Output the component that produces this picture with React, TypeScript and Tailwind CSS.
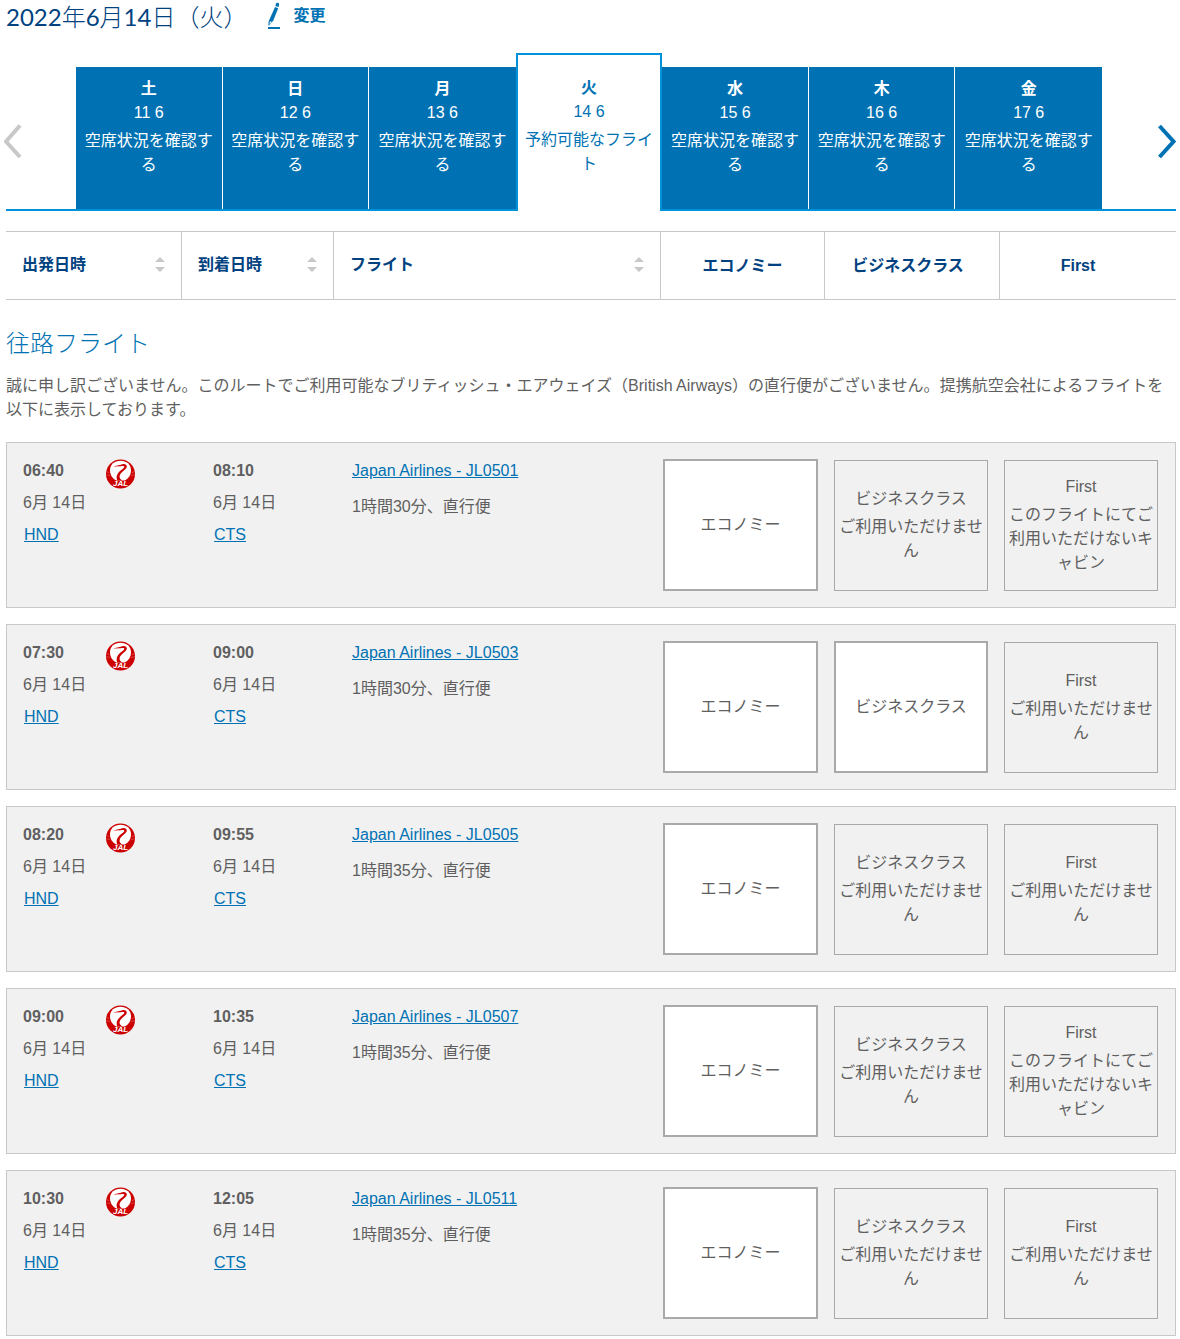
import React from "react";

type Cabin = { name: string; note?: string };
type Flight = { dep: string; arr: string; code: string; duration: string; cabins: Cabin[] };

const SOLD_OUT = "ご利用いただけません";
const NO_CABIN = "このフライトにてご利用いただけないキャビン";

const makeCabins = (business?: string, first?: string): Cabin[] => [
  { name: "エコノミー" },
  { name: "ビジネスクラス", note: business },
  { name: "First", note: first },
];

const flights: Flight[] = [
  { dep: "06:40", arr: "08:10", code: "JL0501", duration: "1時間30分", cabins: makeCabins(SOLD_OUT, NO_CABIN) },
  { dep: "07:30", arr: "09:00", code: "JL0503", duration: "1時間30分", cabins: makeCabins(undefined, SOLD_OUT) },
  { dep: "08:20", arr: "09:55", code: "JL0505", duration: "1時間35分", cabins: makeCabins(SOLD_OUT, SOLD_OUT) },
  { dep: "09:00", arr: "10:35", code: "JL0507", duration: "1時間35分", cabins: makeCabins(SOLD_OUT, NO_CABIN) },
  { dep: "10:30", arr: "12:05", code: "JL0511", duration: "1時間35分", cabins: makeCabins(SOLD_OUT, SOLD_OUT) },
];

const days = [
  { day: "土", date: "11 6" },
  { day: "日", date: "12 6" },
  { day: "月", date: "13 6" },
  { day: "火", date: "14 6", active: true },
  { day: "水", date: "15 6" },
  { day: "木", date: "16 6" },
  { day: "金", date: "17 6" },
];

const cabinPadding = ["pl-[2px] pr-[7px]", "pl-[9px] pr-3", "pl-1 pr-[17px] border-r"];

function PencilIcon() {
  return (
    <svg width="14" height="28" viewBox="0 0 14 28" fill="#0072b4" aria-hidden="true">
      <path d="M8.8 2 10 .4 12.2 1.4 11.8 4.4 11.2 5 8.4 4z" />
      <path d="M8 5 11.2 6.2 6.2 18.8 1.4 24 1.6 19.6z" />
      <path d="M2.8 19.2 4.8 20 2.6 22.2z" fill="#fff" />
      <rect x="1" y="25" width="12" height="2" />
    </svg>
  );
}

function JalLogo() {
  return (
    <svg width="30" height="30" viewBox="0 0 30 30" className="shrink-0" role="img" aria-label="Japan Airlines">
      <circle cx="14.5" cy="15" r="14.5" fill="#cc0000" />
      <path
        d="M14.5 1.8C20.5 1.8 25 5.6 25 11.2 25 16 22.2 20 18.6 21.4H10.4C6.8 20 4 16 4 11.2 4 5.6 8.5 1.8 14.5 1.8Z"
        fill="#fff"
      />
      <path
        d="M6.8 7.6 14.8 5.8C16.8 4.4 20.4 4.6 20.8 7.2 21.2 10.4 14.2 13 13.6 17 13.3 19 14.6 20.6 16.6 21.6H11.4C9.4 17.4 11.6 13.8 15.2 11 17.2 9.4 18.8 8.4 18.2 7.4 17.6 6.7 16 7.1 14.8 7.3Z"
        fill="#cc0000"
      />
      <g stroke="#fff" strokeWidth="0.4" strokeOpacity="0.7" fill="none">
        <path d="M.6 12.5 3.2 13.8M.6 15.5 4 16.6" />
        <path d="M28.4 12.5 25.8 13.8M28.4 15.5 25 16.6" />
      </g>
      <text x="14.5" y="26.8" textAnchor="middle" fontSize="8" fontWeight="700" fontStyle="italic" fill="#fff" fontFamily="Liberation Sans, sans-serif">
        JAL
      </text>
    </svg>
  );
}

function SortIcon() {
  return (
    <svg width="10" height="15" viewBox="0 0 10 15" fill="#c8c8c8" aria-hidden="true">
      <path d="M5 0 10 5H0zM0 10H10L5 15z" />
    </svg>
  );
}

function SortHeader({ label }: { label: string }) {
  return (
    <th scope="col" className="border-y border-r border-[#c8c8c8] p-0">
      <button className="flex h-[67px] w-full items-center justify-between pr-4 pb-0.5 pl-4 text-left font-bold">
        <span>{label}</span>
        <SortIcon />
      </button>
    </th>
  );
}

function Stop({ time, airport }: { time: string; airport: string }) {
  return (
    <div>
      <div className="font-bold">{time}</div>
      <div className="mt-2">6月 14日</div>
      <a href="#" className="mt-2 ml-px block w-fit text-[#0072b4] underline">
        {airport}
      </a>
    </div>
  );
}

function CabinBox({ cabin }: { cabin: Cabin }) {
  if (!cabin.note) {
    return (
      <button className="flex h-[132px] w-full items-center justify-center border-2 border-[#a9a9a9] bg-white">
        {cabin.name}
      </button>
    );
  }
  return (
    <div className="mt-px flex h-[131px] w-full flex-col items-center justify-center gap-1 border border-[#a9a9a9] px-1 pb-px text-center">
      <span>{cabin.name}</span>
      <span>{cabin.note}</span>
    </div>
  );
}

function FlightRow({ flight }: { flight: Flight }) {
  const cell = "border-y border-[#c8c8c8] bg-[#f1f1f1] align-top";
  return (
    <tr className="h-[166px]">
      <td className={`${cell} border-l pt-4 pl-4`}>
        <div className="flex items-start gap-5">
          <Stop time={flight.dep} airport="HND" />
          <JalLogo />
        </div>
      </td>
      <td className={`${cell} pt-4 pl-[31px]`}>
        <Stop time={flight.arr} airport="CTS" />
      </td>
      <td className={`${cell} pt-4 pl-[18px]`}>
        <a href="#" className="block w-fit text-[#0072b4] underline">
          Japan Airlines - {flight.code}
        </a>
        <div className="mt-3">{flight.duration}、直行便</div>
      </td>
      {flight.cabins.map((cabin, i) => (
        <td key={cabin.name} className={`${cell} py-4 ${cabinPadding[i]}`}>
          <CabinBox cabin={cabin} />
        </td>
      ))}
    </tr>
  );
}

export default function App() {
  return (
    <main
      lang="ja"
      className="bg-white pr-1 pl-1.5 font-['Liberation_Sans','Noto_Sans_CJK_JP',sans-serif] text-base leading-6 text-[#5f5f5f]"
    >
      <header className="flex h-[53px] items-start">
        <h1 className="pt-px font-['Lato','Noto_Sans_CJK_JP',sans-serif] text-2xl leading-8 font-normal text-[#00427f]">
          2022<span className="font-light">年</span>6<span className="font-light">月</span>14
          <span className="font-light">日（火）</span>
        </h1>
        <button className="ml-5 flex h-8 items-center gap-3 font-bold text-[#0072b4]">
          <PencilIcon />
          変更
        </button>
      </header>

      <nav aria-label="日付" className="flex items-end">
        <button aria-label="前の日" className="flex h-36 w-[70px] shrink-0 items-center border-b-2 border-[#0093d9] pt-1.5">
          <svg width="18" height="34" viewBox="0 0 18 34" fill="none" stroke="#c8c8c8" strokeWidth="4" className="-ml-0.5">
            <path d="M16 1.5 2 17.5 16 33" />
          </svg>
        </button>
        <ol className="grid flex-1 grid-cols-7 items-end text-center">
          {days.map((d, i) => (
            <li
              key={d.day}
              className={
                d.active
                  ? "h-[158px] border-2 border-b-0 border-[#0093d9] bg-white text-[#0072b4]"
                  : "h-36 border-b-2 border-[#0093d9] bg-[#0072b4] text-white"
              }
            >
              <a
                href="#"
                className={
                  d.active
                    ? "block h-full px-1.5 pt-[21px]"
                    : i === 2 || i === 6
                      ? "block h-full px-2 pt-2.5"
                      : "block h-full border-r border-white px-2 pt-2.5"
                }
              >
                <strong className="block">{d.day}</strong>
                <span className="block">{d.date}</span>
                <span className="mt-1 block">{d.active ? "予約可能なフライト" : "空席状況を確認する"}</span>
              </a>
            </li>
          ))}
        </ol>
        <button aria-label="次の日" className="flex h-36 w-[74px] shrink-0 items-center justify-end border-b-2 border-[#0093d9] pt-1.5">
          <svg width="18" height="34" viewBox="0 0 18 34" fill="none" stroke="#0072b4" strokeWidth="4">
            <path d="M1.5 2 15.5 17.5 1.5 33" />
          </svg>
        </button>
      </nav>

      <table className="mt-1 w-full table-fixed border-separate border-spacing-x-0 border-spacing-y-4">
        <colgroup>
          <col className="w-[176px]" />
          <col className="w-[152px]" />
          <col />
          <col className="w-[164px]" />
          <col className="w-[175px]" />
          <col className="w-[176px]" />
        </colgroup>
        <thead className="text-[#00427f]">
          <tr>
            <SortHeader label="出発日時" />
            <SortHeader label="到着日時" />
            <SortHeader label="フライト" />
            <th scope="col" className="border-y border-r border-[#c8c8c8] p-0">エコノミー</th>
            <th scope="col" className="border-y border-r border-[#c8c8c8] p-0 pr-2">ビジネスクラス</th>
            <th scope="col" className="border-y border-[#c8c8c8] p-0 pr-5">First</th>
          </tr>
        </thead>
        <tbody>
          <tr className="h-[110px]">
            <td colSpan={6} className="p-0 pt-2 align-top">
              <h2 className="font-['Noto_Sans_CJK_JP',sans-serif] text-2xl leading-9 font-light text-[#0072b4]">
                往路フライト
              </h2>
              <p className="mt-3.5">
                誠に申し訳ございません。このルートでご利用可能なブリティッシュ・エアウェイズ（British
                Airways）の直行便がございません。提携航空会社によるフライトを以下に表示しております。
              </p>
            </td>
          </tr>
          {flights.map((f) => (
            <FlightRow key={f.code} flight={f} />
          ))}
        </tbody>
      </table>
    </main>
  );
}
